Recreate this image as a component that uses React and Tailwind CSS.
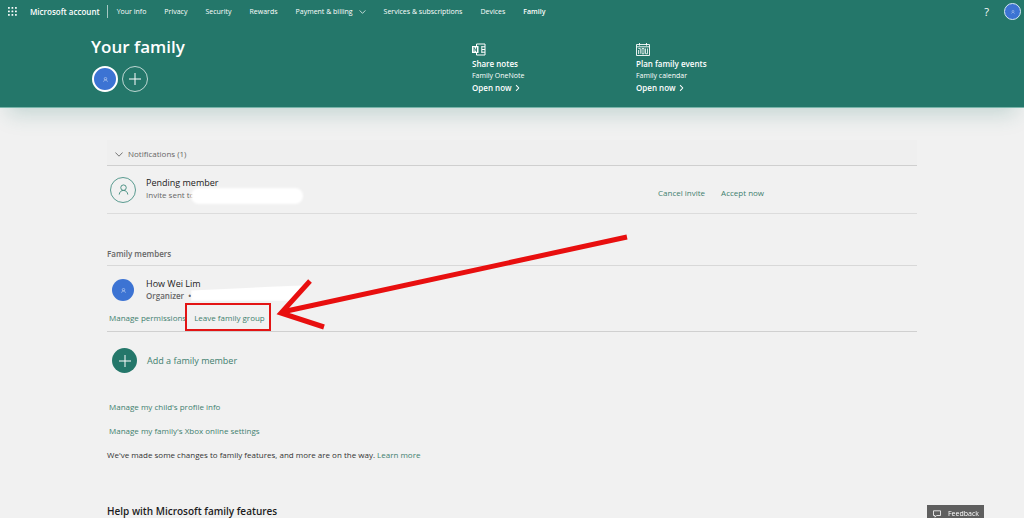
import React from "react";

function Person({ className, strokeWidth = 1.2 }) {
  return (
    <svg viewBox="0 0 12 12" fill="none" stroke="currentColor" strokeWidth={strokeWidth} className={className} aria-hidden="true">
      <circle cx="6" cy="4" r="3" />
      <path d="M1.3 11.5C1.6 8.7 3.5 7 6 7s4.4 1.7 4.7 4.5" />
    </svg>
  );
}

function Plus({ className }) {
  return (
    <svg viewBox="0 0 12 12" fill="none" stroke="currentColor" strokeWidth="1" className={className} aria-hidden="true">
      <path d="M6 0v12M0 6h12" />
    </svg>
  );
}

function Chevron({ className, strokeWidth = 0.9 }) {
  return (
    <svg viewBox="0 0 8 5" fill="none" stroke="currentColor" strokeWidth={strokeWidth} className={className} aria-hidden="true">
      <path d="M0.4 0.5 4 4.2 7.6 0.5" />
    </svg>
  );
}

function Waffle() {
  return (
    <svg viewBox="0 0 9 9" fill="currentColor" className="size-[9px]" aria-hidden="true">
      {[0, 3.5, 7].map((y) => [0, 3.5, 7].map((x) => <rect key={`${x}-${y}`} x={x} y={y} width="1.8" height="1.8" rx="0.5" />))}
    </svg>
  );
}

function OneNoteIcon() {
  return (
    <svg viewBox="0 0 14 13" fill="none" stroke="currentColor" className="h-[13px] w-[14px]" aria-hidden="true">
      <path d="M4.5 3V1h8.5v11H4.5v-2M10 3.8h3M10 6.5h3M10 9.2h3M9.8 3v7" strokeWidth="1" />
      <rect x="0" y="3" width="6.5" height="7" fill="currentColor" stroke="none" />
      <path d="M2 8.7V4.4l2.5 4.2V4.4" stroke="#24776a" strokeWidth="0.9" />
    </svg>
  );
}

function CalendarIcon() {
  return (
    <svg viewBox="0 0 14 13" fill="none" stroke="currentColor" strokeWidth="0.9" className="h-[13px] w-[14px]" aria-hidden="true">
      <path d="M0.5 1.5h13v11H0.5zM0.5 3.8h13M3.5 0v2.6M10.5 0v2.6" />
      <path d="M2.3 5.5h2v5.3M6 5.5h2v5.3H6zM11.5 5.5v5.3h-2V5.5M2.5 7v4" strokeWidth="0.8" />
    </svg>
  );
}

function NavLink({ children, current }) {
  return (
    <a href="#" aria-current={current ? "page" : undefined} className={current ? "font-semibold" : ""}>
      {children}
    </a>
  );
}

function Resource({ icon, title, text }) {
  return (
    <section className="w-[164px]">
      {icon}
      <h2 className="mt-0.5 text-[8px] leading-3 font-semibold">{title}</h2>
      <p className="text-[7px] leading-[11px]">{text}</p>
      <a href="#" className="flex items-center gap-0.5 text-[8px] leading-[13px] font-semibold">
        Open now
        <Chevron className="h-1 w-[7px] -rotate-90" strokeWidth={1.3} />
      </a>
    </section>
  );
}

export default function App() {
  return (
    <div className="min-h-screen overflow-hidden bg-[#f1f1f1] font-['Open_Sans','Noto_Sans',sans-serif] text-[8px] leading-3 text-[#333]">
      <header className="border-b border-[#79b5aa] bg-[#24776a] text-white shadow-[0_14px_20px_-8px_rgba(36,119,106,0.22)]">
        <nav className="flex h-[23px] items-center pr-[3px] pl-2 text-[7px]">
          <button type="button" aria-label="App launcher">
            <Waffle />
          </button>
          <a href="#" className="ml-[13px] text-[8px] font-semibold">Microsoft account</a>
          <span className="mr-[9px] ml-[7px] h-[13px] w-px bg-white/60" />
          <div className="flex items-center gap-[18px]">
            <NavLink>Your info</NavLink>
            <NavLink>Privacy</NavLink>
            <NavLink>Security</NavLink>
            <NavLink>Rewards</NavLink>
            <button type="button" className="flex items-center gap-[6px]">
              Payment &amp; billing
              <Chevron className="h-1 w-[7px]" />
            </button>
            <NavLink>Services &amp; subscriptions</NavLink>
            <NavLink>Devices</NavLink>
            <NavLink current>Family</NavLink>
          </div>
          <button type="button" aria-label="Help" className="ml-auto text-[11px]">?</button>
          <button type="button" aria-label="Account" className="ml-[15px] grid size-[17px] place-items-center rounded-full border border-[#d5e8f5] bg-[#3c73d3]">
            <Person className="size-1 text-white/70" />
          </button>
        </nav>
        <div className="mx-auto flex h-[84px] max-w-[842px]">
          <div className="w-[381px] pt-3">
            <h1 className="text-[17px] leading-6 font-semibold">Your family</h1>
            <div className="mt-[7px] flex gap-1 pl-px">
              <button type="button" aria-label="Family member" className="grid size-[26px] place-items-center rounded-full border-2 border-white bg-[#3c73d3]">
                <Person className="size-[5px] text-white/80" />
              </button>
              <button type="button" aria-label="Add member" className="grid size-[26px] place-items-center rounded-full border border-white/70">
                <Plus className="size-3" />
              </button>
            </div>
          </div>
          <div className="flex pt-5">
            <Resource icon={<OneNoteIcon />} title="Share notes" text="Family OneNote" />
            <Resource icon={<CalendarIcon />} title="Plan family events" text="Family calendar" />
          </div>
        </div>
      </header>

      <main className="relative mx-auto max-w-[810px]">
        <div className="pt-8">
          <section>
            <button type="button" className="flex h-[26px] w-full items-center gap-[5px] border-b border-[#cfcfcf] bg-[#efefef] pt-[3px] pl-2 text-[#666]">
              <Chevron className="h-[5px] w-2" />
              Notifications (1)
            </button>
            <div className="flex h-12 items-center border-b border-[#dcdcdc]">
              <span className="ml-[3px] grid size-[26px] place-items-center rounded-full border border-[#5a9b90] text-[#3f8a7c]">
                <Person className="size-[11px]" strokeWidth={1} />
              </span>
              <div className="ml-[10px] w-[512px] pb-[2px]">
                <h3 className="text-[9px] leading-3 text-[#222]">Pending member</h3>
                <p className="relative text-[#666]">
                  Invite sent to
                  <span className="absolute top-[-1px] left-[45px] h-4 w-[112px] rounded-full bg-white blur-[1px]" />
                </p>
              </div>
              <button type="button" className="mt-1.5 text-[#3f7f6f]">Cancel invite</button>
              <button type="button" className="mt-1.5 ml-4 text-[#3f7f6f]">Accept now</button>
            </div>
          </section>

          <section className="mt-[34px]">
            <h2 className="h-[18px] border-b border-[#d8d8d8] font-semibold text-[#666]">Family members</h2>
            <div className="h-[66px] border-b border-[#d0d0d0] pt-3">
              <div className="flex items-center">
                <span className="ml-[5px] grid size-[22px] place-items-center rounded-full bg-[#3c73d3]">
                  <Person className="size-[5px] text-white/80" />
                </span>
                <div className="ml-3">
                  <h3 className="text-[9px] leading-3 text-[#222]">How Wei Lim</h3>
                  <p className="relative font-semibold text-[#666]">
                    Organizer&nbsp; •
                    <span className="absolute top-[-5px] left-[45px] h-4 w-[118px] bg-white blur-[1px] [clip-path:polygon(0_35%,100%_0,88%_100%,0_100%)]" />
                  </p>
                </div>
              </div>
              <div className="mt-[10px] flex gap-2 text-[#3f7f6f]">
                <a href="#" className="ml-0.5">Manage permissions</a>
                <a href="#">Leave family group</a>
              </div>
            </div>
            <button type="button" className="mt-4 ml-[5px] flex items-center gap-[10px] text-[9px] text-[#3f7f6f]">
              <span className="grid size-[25px] place-items-center rounded-full bg-[#24776a] text-white">
                <Plus className="size-3" />
              </span>
              Add a family member
            </button>
          </section>

          <div className="mt-7 flex flex-col items-start gap-3">
            <a href="#" className="ml-0.5 text-[#3f7f6f]">Manage my child's profile info</a>
            <a href="#" className="ml-0.5 text-[#3f7f6f]">Manage my family's Xbox online settings</a>
            <p>
              We've made some changes to family features, and more are on the way. <a href="#" className="text-[#3f7f6f]">Learn more</a>
            </p>
          </div>
          <h2 className="mt-[42px] text-[10px] leading-4 font-semibold text-[#1c1c1c]">Help with Microsoft family features</h2>
        </div>

        <svg viewBox="0 0 524 98" className="pointer-events-none absolute top-[124px] left-0 h-[98px] w-[524px]" fill="none" stroke="#e80f0f" aria-hidden="true">
          <path d="M520 5 175 80M203 49 174 81 217 95" strokeWidth="5" />
        </svg>
        <span className="pointer-events-none absolute top-[195px] left-[78px] h-7 w-[86px] border-2 border-[#e31414]" />
      </main>

      <button type="button" className="fixed right-10 bottom-0 flex h-[13px] w-[57px] items-center gap-[7px] bg-[#5f5f5f] pt-1 pl-[6px] text-[7px] text-white">
        <svg viewBox="0 0 8 8" className="size-2" fill="none" stroke="currentColor" strokeWidth="0.8" aria-hidden="true">
          <path d="M0.5 0.8h7v4.7H3.6L2 7.2V5.5H0.5z" />
        </svg>
        Feedback
      </button>
    </div>
  );
}
